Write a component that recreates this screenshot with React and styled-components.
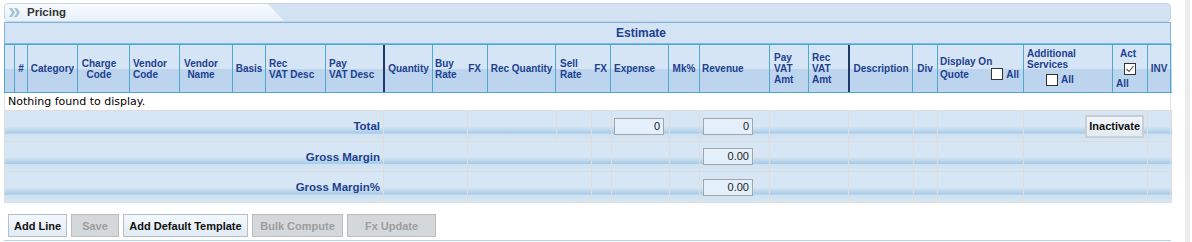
import React from 'react';
import styled, { createGlobalStyle } from 'styled-components';

const GlobalStyle = createGlobalStyle`
  html, body { margin: 0; padding: 0; background: #fff; }
  body { font-family: "Liberation Sans", Arial, sans-serif; }
`;

const HEAD_COLS = [10, 13, 50, 52, 50, 53, 33, 60, 58, 49, 55, 68, 55, 58, 31, 70, 39, 40, 64, 25, 86, 89, 35, 24];
const FOOT_COLS = [379, 84, 89, 35, 20, 58, 30, 70, 79, 65, 24, 86, 124, 24];
const toTemplate = (cols) => cols.map((c) => `${c}px`).join(' ');

const NAVY_TEXT = '#213f8f';
const HEAD_LINE = '#4ea9cc';
const FOOT_LINE = '#dddddd';

const Page = styled.div`
  display: flex;
  width: 1192px;
  height: 242px;
  overflow: hidden;
`;

const Main = styled.div`
  flex: 0 0 1185px;
  box-sizing: border-box;
  padding: 3px 0 0 4px;
`;

const ScrollStrip = styled.div`
  flex: 0 0 5px;
  background: #ececec;
`;

const TitleBar = styled.div`
  display: flex;
  width: 1167px;
  height: 19px;
  box-sizing: border-box;
  border: 1px solid #c4d5e6;
  border-radius: 4px;
  background: #d3e3f3;
  overflow: hidden;
`;

const Tab = styled.div`
  flex: 0 0 280px;
  display: flex;
  align-items: center;
  gap: 7px;
  padding-left: 4px;
  box-sizing: border-box;
  background: linear-gradient(#f7fbfe, #e7f0f9);
  clip-path: polygon(0 0, 263px 0, 279px 100%, 0 100%);
`;

const TitleText = styled.span`
  font: bold 11.5px/17px "Liberation Sans", Arial, sans-serif;
  color: #333;
`;

const EstimateRow = styled.div`
  width: 1167px;
  height: 22px;
  box-sizing: border-box;
  border: 1px solid #7fb6dc;
  background: #d4e4f4;
  padding-left: 107px;
  text-align: center;
  font: bold 12px/20px "Liberation Sans", Arial, sans-serif;
  color: ${NAVY_TEXT};
`;

const HeaderGrid = styled.div`
  display: grid;
  grid-template-columns: ${toTemplate(HEAD_COLS)};
  width: 1168px;
  height: 49px;
  box-sizing: border-box;
  border-top: 1px solid ${HEAD_LINE};
  border-bottom: 1px solid ${HEAD_LINE};
  background: linear-gradient(#d5e5f5 50%, #bdd4ee 50%);
`;

const HeadCell = styled.div`
  box-sizing: border-box;
  border-left: ${(p) => (p.$thick ? '2px solid #1d3a6b' : `1px solid ${HEAD_LINE}`)};
  ${(p) => p.$last && `border-right: 1px solid ${HEAD_LINE};`}
  display: flex;
  flex-direction: ${(p) => (p.$column ? 'column' : 'row')};
  align-items: ${(p) => (p.$column ? 'stretch' : 'center')};
  justify-content: ${(p) =>
    p.$pt !== undefined
      ? 'flex-start'
      : p.$column
      ? 'center'
      : p.$align === 'left'
      ? 'flex-start'
      : p.$align === 'split'
      ? 'space-between'
      : 'center'};
  text-align: ${(p) => (p.$align === 'left' || p.$align === 'split' ? 'left' : 'center')};
  padding: ${(p) => p.$pt ?? 0}px ${(p) => p.$pr ?? 0}px 0 ${(p) => p.$pl ?? 0}px;
  font: bold 10px/11px "Liberation Sans", Arial, sans-serif;
  color: ${NAVY_TEXT};
  white-space: nowrap;
  overflow: hidden;
`;

const Lines = styled.span`
  display: block;
`;

const CheckLine = styled.div`
  display: flex;
  align-items: center;
  justify-content: ${(p) => (p.$spread ? 'space-between' : 'flex-start')};
  margin: ${(p) => p.$m || '0'};
  height: 14px;
`;

const Tick = styled.span`
  display: inline-flex;
  align-items: center;
  justify-content: center;
  width: 12px;
  height: 12px;
  box-sizing: border-box;
  border: 1px solid #333;
  background: #fff;
  margin: ${(p) => p.$m || '0 3px 0 0'};
`;

const Label = styled.span`
  display: block;
  margin: ${(p) => p.$m || '0'};
`;

const EmptyRow = styled.div`
  width: 1167px;
  height: 17px;
  box-sizing: border-box;
  border-left: 1px solid #e2e2e2;
  border-right: 1px solid #e2e2e2;
  padding-left: 3px;
  font: 11px/17px "DejaVu Sans", Verdana, sans-serif;
  color: #000;
`;

const Footer = styled.div`
  width: 1168px;
  border-bottom: 1px solid ${FOOT_LINE};
`;

const FootRow = styled.div`
  display: grid;
  grid-template-columns: ${toTemplate(FOOT_COLS)};
  height: ${(p) => p.$h}px;
  box-sizing: border-box;
  border-top: 1px solid ${FOOT_LINE};
  background: linear-gradient(
    #d7e6f4 0%,
    #d7e6f4 52%,
    #bcd8ee 64%,
    #a7cbe7 74%,
    #cfe2f2 77%,
    #d6e6f4 100%
  );
`;

const FootCell = styled.div`
  grid-column: span ${(p) => p.$span || 1};
  box-sizing: border-box;
  border-left: 1px solid ${FOOT_LINE};
  ${(p) => p.$last && `border-right: 1px solid ${FOOT_LINE};`}
  display: flex;
  align-items: center;
  justify-content: ${(p) => (p.$right ? 'flex-end' : 'flex-start')};
  padding: 0 ${(p) => p.$pr ?? 0}px 0 ${(p) => p.$pl ?? 0}px;
`;

const FootLabel = styled.span`
  font: bold 11.5px "Liberation Sans", Arial, sans-serif;
  color: ${NAVY_TEXT};
`;

const AmountBox = styled.div`
  width: 50px;
  height: 17px;
  box-sizing: border-box;
  border: 1px solid #a6a6a6;
  background: #e3f0fc;
  text-align: right;
  padding: 0 3px;
  font: 11px/15px "Liberation Sans", Arial, sans-serif;
  color: #222;
`;

const SmallButton = styled.button`
  height: 23px;
  box-sizing: border-box;
  padding: 0 2px;
  margin: 0;
  border: 2px solid #cbcfd3;
  background: linear-gradient(#f2f6fa, #e2ebf3);
  font: bold 11px "Liberation Sans", Arial, sans-serif;
  color: #111;
`;

const ButtonBar = styled.div`
  display: flex;
  gap: 4px;
  margin-top: 11px;
  padding-left: 4px;
`;

const ActionButton = styled.button`
  width: ${(p) => p.$w}px;
  height: 23px;
  box-sizing: border-box;
  margin: 0;
  padding: 0;
  border: 1px solid ${(p) => (p.disabled ? '#bdbdbd' : '#b3bfcb')};
  background: ${(p) => (p.disabled ? '#d5d8db' : 'linear-gradient(#f3f8fc, #e1ebf5)')};
  font: bold 11px "Liberation Sans", Arial, sans-serif;
  color: ${(p) => (p.disabled ? '#9d9d9d' : '#111')};
  text-align: center;
`;

const BottomRule = styled.div`
  width: 1167px;
  height: 1px;
  margin-top: 3px;
  background: #b7d2ea;
`;

const Chevrons = () => (
  <svg width="11" height="9" viewBox="0 0 11 9">
    <path d="M0 0 L3 0 L6 4.5 L3 9 L0 9 L3 4.5 Z" fill="#a3c2d2" />
    <path d="M5 0 L8 0 L11 4.5 L8 9 L5 9 L8 4.5 Z" fill="#a3c2d2" />
  </svg>
);

const CheckBox = ({ checked, m }) => (
  <Tick $m={m}>
    {checked && (
      <svg width="10" height="10" viewBox="0 0 10 10">
        <path d="M1.5 5 L4 7.5 L8.5 2" fill="none" stroke="#555" strokeWidth="1.1" />
      </svg>
    )}
  </Tick>
);

const TwoLines = ({ a, b, c }) => (
  <Lines>
    {a}
    <br />
    {b}
    {c && (
      <>
        <br />
        {c}
      </>
    )}
  </Lines>
);

export default function App() {
  return (
    <>
      <GlobalStyle />
      <Page>
        <Main>
          <TitleBar>
            <Tab>
              <Chevrons />
              <TitleText>Pricing</TitleText>
            </Tab>
          </TitleBar>

          <EstimateRow>Estimate</EstimateRow>

          <HeaderGrid>
            <HeadCell />
            <HeadCell>#</HeadCell>
            <HeadCell>Category</HeadCell>
            <HeadCell $pr={9}>
              <TwoLines a="Charge" b="Code" />
            </HeadCell>
            <HeadCell $align="left" $pl={3}>
              <TwoLines a="Vendor" b="Code" />
            </HeadCell>
            <HeadCell $pr={10}>
              <TwoLines a="Vendor" b="Name" />
            </HeadCell>
            <HeadCell>Basis</HeadCell>
            <HeadCell $align="left" $pl={3}>
              <TwoLines a="Rec" b="VAT Desc" />
            </HeadCell>
            <HeadCell $align="left" $pl={3}>
              <TwoLines a="Pay" b="VAT Desc" />
            </HeadCell>
            <HeadCell $thick>Quantity</HeadCell>
            <HeadCell $align="split" $pl={2} $pr={6}>
              <TwoLines a="Buy" b="Rate" />
              <span>FX</span>
            </HeadCell>
            <HeadCell>Rec Quantity</HeadCell>
            <HeadCell $align="split" $pl={4} $pr={3}>
              <TwoLines a="Sell" b="Rate" />
              <span>FX</span>
            </HeadCell>
            <HeadCell $align="left" $pl={3}>Expense</HeadCell>
            <HeadCell>Mk%</HeadCell>
            <HeadCell $align="left" $pl={2}>Revenue</HeadCell>
            <HeadCell $align="left" $pl={4}>
              <TwoLines a="Pay" b="VAT" c="Amt" />
            </HeadCell>
            <HeadCell $align="left" $pl={3}>
              <TwoLines a="Rec" b="VAT" c="Amt" />
            </HeadCell>
            <HeadCell $thick>Description</HeadCell>
            <HeadCell>Div</HeadCell>
            <HeadCell $column $align="left" $pl={2} $pr={4}>
              <Label>Display On</Label>
              <CheckLine $spread>
                <span>Quote</span>
                <CheckLine>
                  <CheckBox />
                  <span>All</span>
                </CheckLine>
              </CheckLine>
            </HeadCell>
            <HeadCell $column $align="left" $pl={3} $pt={2.5}>
              <Label>Additional</Label>
              <Label>Services</Label>
              <CheckLine $m="3px 0 0 19px">
                <CheckBox />
                <span>All</span>
              </CheckLine>
            </HeadCell>
            <HeadCell $column $align="left" $pl={2} $pt={2.5}>
              <Label $m="0 0 0 5px">Act</Label>
              <CheckLine $m="3px 0 0 9px">
                <CheckBox checked m="0" />
              </CheckLine>
              <Label $m="2px 0 0 1px">All</Label>
            </HeadCell>
            <HeadCell $last>INV</HeadCell>
          </HeaderGrid>

          <EmptyRow>Nothing found to display.</EmptyRow>

          <Footer>
            <FootRow $h={31}>
              <FootCell $right $pr={3}>
                <FootLabel>Total</FootLabel>
              </FootCell>
              <FootCell />
              <FootCell />
              <FootCell />
              <FootCell />
              <FootCell $pl={2}>
                <AmountBox>0</AmountBox>
              </FootCell>
              <FootCell />
              <FootCell $pl={3}>
                <AmountBox>0</AmountBox>
              </FootCell>
              <FootCell />
              <FootCell />
              <FootCell />
              <FootCell />
              <FootCell $right $pr={3}>
                <SmallButton type="button">Inactivate</SmallButton>
              </FootCell>
              <FootCell $last />
            </FootRow>
            <FootRow $h={30}>
              <FootCell $right $pr={3}>
                <FootLabel>Gross Margin</FootLabel>
              </FootCell>
              <FootCell />
              <FootCell $span={2} />
              <FootCell />
              <FootCell />
              <FootCell />
              <FootCell $pl={3}>
                <AmountBox>0.00</AmountBox>
              </FootCell>
              <FootCell />
              <FootCell />
              <FootCell />
              <FootCell />
              <FootCell />
              <FootCell $last />
            </FootRow>
            <FootRow $h={31}>
              <FootCell $right $pr={3}>
                <FootLabel>Gross Margin%</FootLabel>
              </FootCell>
              <FootCell />
              <FootCell $span={2} />
              <FootCell />
              <FootCell />
              <FootCell />
              <FootCell $pl={3}>
                <AmountBox>0.00</AmountBox>
              </FootCell>
              <FootCell />
              <FootCell />
              <FootCell />
              <FootCell />
              <FootCell />
              <FootCell $last />
            </FootRow>
          </Footer>

          <ButtonBar>
            <ActionButton type="button" $w={59}>Add Line</ActionButton>
            <ActionButton type="button" $w={48} disabled>Save</ActionButton>
            <ActionButton type="button" $w={125}>Add Default Template</ActionButton>
            <ActionButton type="button" $w={91} disabled>Bulk Compute</ActionButton>
            <ActionButton type="button" $w={89} disabled>Fx Update</ActionButton>
          </ButtonBar>

          <BottomRule />
        </Main>
        <ScrollStrip />
      </Page>
    </>
  );
}
